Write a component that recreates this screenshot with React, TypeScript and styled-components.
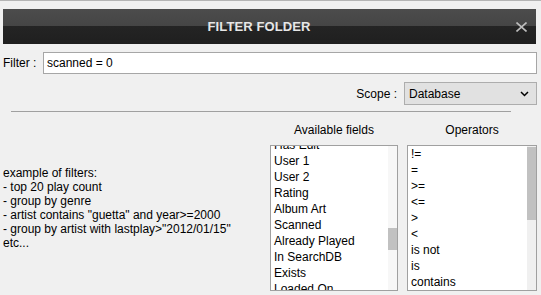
import styled, { createGlobalStyle } from 'styled-components';

const GlobalStyle = createGlobalStyle`
  html, body {
    margin: 0;
    padding: 0;
    background: #f0f0f0;
  }
  body {
    font-family: 'Liberation Sans', Arial, sans-serif;
    font-size: 12px;
    color: #000;
  }
`;

const Window = styled.div`
  width: 541px;
  height: 295px;
  box-sizing: border-box;
  border-top: 1px solid #b4b4b4;
  display: flex;
  flex-direction: column;
  overflow: hidden;
`;

const TitleBar = styled.div`
  margin: 8px 5px 0 3px;
  height: 35px;
  display: flex;
  align-items: center;
  background: linear-gradient(to bottom, #4c4c4c 0%, #454545 48%, #242424 49%, #1f1f1f 100%);
`;

const Title = styled.div`
  flex: 1;
  text-align: center;
  color: #e6e6e6;
  font-weight: bold;
  font-size: 13px;
  letter-spacing: 0.1px;
`;

const CloseButton = styled.button`
  width: 12px;
  height: 12px;
  margin-right: 9px;
  padding: 0;
  border: 0;
  background: none;
  display: flex;
  align-items: center;
  justify-content: center;
`;

const Row = styled.div<{ $end?: boolean }>`
  display: flex;
  align-items: center;
  justify-content: ${({ $end }) => ($end ? 'flex-end' : 'flex-start')};
  margin: 8px 4px 0 3px;
`;

const Label = styled.span<{ $width?: number }>`
  width: ${({ $width }) => ($width ? `${$width}px` : 'auto')};
  margin-right: ${({ $width }) => ($width ? '0' : '7px')};
  white-space: nowrap;
`;

const TextInput = styled.div`
  flex: 1;
  height: 22px;
  box-sizing: border-box;
  border: 1px solid #a6a6a6;
  background: #fff;
  padding: 0 3px;
  line-height: 20px;
`;

const Select = styled.div`
  width: 133px;
  height: 23px;
  box-sizing: border-box;
  border: 1px solid #adadad;
  background: #e1e1e1;
  display: flex;
  align-items: center;
  justify-content: space-between;
  padding: 0 7px 0 4px;
`;

const Divider = styled.hr`
  margin: 6px 30px 0 11px;
  border: 0;
  border-top: 1px solid #a0a0a0;
  height: 0;
`;

const Content = styled.div`
  flex: 1;
  display: flex;
  margin: 0 4px 0 3px;
  min-height: 0;
`;

const Examples = styled.div`
  flex: 1;
  padding-top: 54px;
  line-height: 14px;
  white-space: pre;
`;

const Column = styled.div<{ $width: number; $gap?: number }>`
  width: ${({ $width }) => $width}px;
  margin-left: ${({ $gap }) => $gap ?? 0}px;
  display: flex;
  flex-direction: column;
`;

const ColumnHeader = styled.div`
  height: 33px;
  box-sizing: border-box;
  padding-top: 11px;
  line-height: 14px;
  text-align: center;
`;

const ListBox = styled.div`
  height: 146px;
  box-sizing: border-box;
  border: 1px solid #a0a0a0;
  background: #fff;
  position: relative;
  overflow: hidden;
`;

const ListItems = styled.div<{ $offset: number }>`
  margin-top: ${({ $offset }) => $offset}px;
  padding-left: 3px;
`;

const ListItem = styled.div`
  height: 16px;
  line-height: 16px;
  white-space: nowrap;
`;

const ScrollTrack = styled.div<{ $bg: string }>`
  position: absolute;
  top: 0;
  right: 0;
  bottom: 0;
  width: 9px;
  background: ${({ $bg }) => $bg};
`;

const ScrollThumb = styled.div`
  position: absolute;
  left: 0;
  right: 0;
  background: #c1c1c1;
`;

const fields = [
  'Has Edit',
  'User 1',
  'User 2',
  'Rating',
  'Album Art',
  'Scanned',
  'Already Played',
  'In SearchDB',
  'Exists',
  'Loaded On',
];

const operators = ['!=', '=', '>=', '<=', '>', '<', 'is not', 'is', 'contains'];

const examples = `example of filters:
- top 20 play count
- group by genre
- artist contains "guetta" and year>=2000
- group by artist with lastplay>"2012/01/15"
etc...`;

export default function App() {
  return (
    <>
      <GlobalStyle />
      <Window>
        <TitleBar>
          <Title>FILTER FOLDER</Title>
          <CloseButton aria-label="Close">
            <svg width="11" height="10" viewBox="0 0 11 10">
              <path d="M0.5 0.5 L10.5 9.5 M10.5 0.5 L0.5 9.5" stroke="#bdbdbd" strokeWidth="1.6" />
            </svg>
          </CloseButton>
        </TitleBar>

        <Row>
          <Label $width={40}>Filter :</Label>
          <TextInput>scanned = 0</TextInput>
        </Row>

        <Row $end>
          <Label>Scope :</Label>
          <Select>
            <span>Database</span>
            <svg width="9" height="6" viewBox="0 0 9 6">
              <path d="M1 1 L4.5 4.5 L8 1" stroke="#000" strokeWidth="1.5" fill="none" />
            </svg>
          </Select>
        </Row>

        <Divider />

        <Content>
          <Examples>{examples}</Examples>

          <Column $width={128}>
            <ColumnHeader>Available fields</ColumnHeader>
            <ListBox>
              <ListItems $offset={-9}>
                {fields.map((f) => (
                  <ListItem key={f}>{f}</ListItem>
                ))}
              </ListItems>
              <ScrollTrack $bg="#f7f7f7">
                <ScrollThumb style={{ top: 82, height: 22 }} />
              </ScrollTrack>
            </ListBox>
          </Column>

          <Column $width={130} $gap={9}>
            <ColumnHeader>Operators</ColumnHeader>
            <ListBox>
              <ListItems $offset={0}>
                {operators.map((o) => (
                  <ListItem key={o}>{o}</ListItem>
                ))}
              </ListItems>
              <ScrollTrack $bg="#f0f0f0">
                <ScrollThumb style={{ top: 1, height: 73 }} />
              </ScrollTrack>
            </ListBox>
          </Column>
        </Content>
      </Window>
    </>
  );
}
